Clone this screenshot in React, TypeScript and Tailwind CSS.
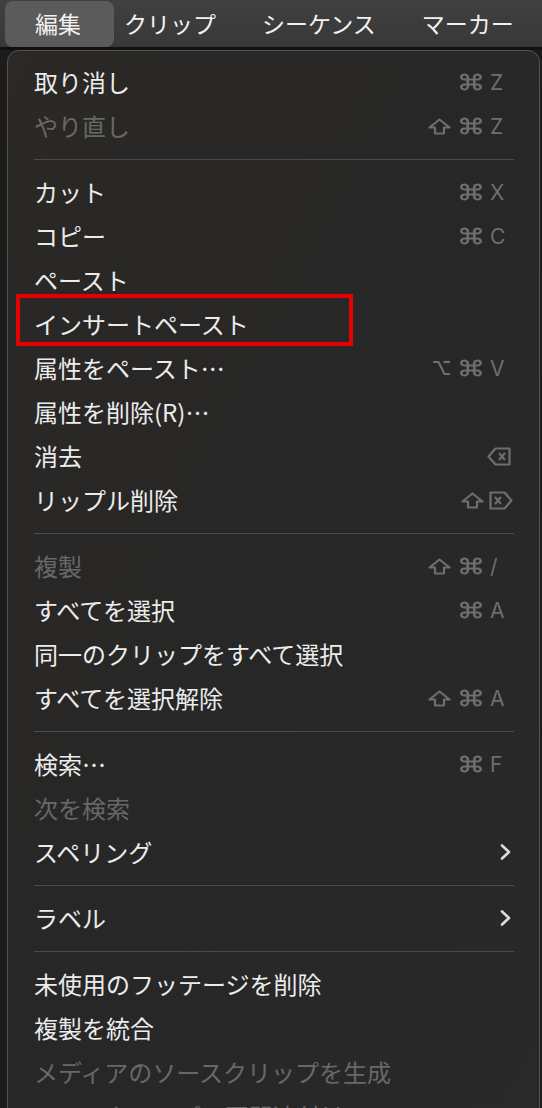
import React from 'react'

type Mod = 'shift' | 'cmd' | 'opt'

interface MenuItem {
  label: string
  disabled?: boolean
  mods?: Mod[]
  keyLabel?: string
  keyIcon?: 'del' | 'fdel'
  submenu?: boolean
  boxed?: boolean
}

type Entry = MenuItem | 'sep'

const entries: Entry[] = [
  { label: '取り消し', mods: ['cmd'], keyLabel: 'Z' },
  { label: 'やり直し', disabled: true, mods: ['shift', 'cmd'], keyLabel: 'Z' },
  'sep',
  { label: 'カット', mods: ['cmd'], keyLabel: 'X' },
  { label: 'コピー', mods: ['cmd'], keyLabel: 'C' },
  { label: 'ペースト' },
  { label: 'インサートペースト', boxed: true },
  { label: '属性をペースト…', mods: ['opt', 'cmd'], keyLabel: 'V' },
  { label: '属性を削除(R)…' },
  { label: '消去', keyIcon: 'del' },
  { label: 'リップル削除', mods: ['shift'], keyIcon: 'fdel' },
  'sep',
  { label: '複製', disabled: true, mods: ['shift', 'cmd'], keyLabel: '/' },
  { label: 'すべてを選択', mods: ['cmd'], keyLabel: 'A' },
  { label: '同一のクリップをすべて選択' },
  { label: 'すべてを選択解除', mods: ['shift', 'cmd'], keyLabel: 'A' },
  'sep',
  { label: '検索…', mods: ['cmd'], keyLabel: 'F' },
  { label: '次を検索', disabled: true },
  { label: 'スペリング', submenu: true },
  'sep',
  { label: 'ラベル', submenu: true },
  'sep',
  { label: '未使用のフッテージを削除' },
  { label: '複製を統合' },
  { label: 'メディアのソースクリップを生成', disabled: true },
  { label: 'ソースクリップの再関連付け', disabled: true },
]

function CmdIcon() {
  return (
    <svg width="26" height="20" viewBox="0 0 24 24" preserveAspectRatio="none" fill="none" stroke="currentColor" strokeWidth={2.4}>
      <path d="M15 6v12a3 3 0 1 0 3-3H6a3 3 0 1 0 3 3V6a3 3 0 1 0-3 3h12a3 3 0 1 0-3-3" />
    </svg>
  )
}

function ShiftIcon() {
  return (
    <svg width="23" height="17" viewBox="0 0 23 17" fill="none" stroke="currentColor" strokeWidth={2.2} strokeLinejoin="round">
      <path d="M11.5 1.5 L21.5 9.5 H16 V15.5 H7 V9.5 H1.5 Z" />
    </svg>
  )
}

function OptIcon() {
  return (
    <svg width="19" height="16" viewBox="0 0 19 16" fill="none" stroke="currentColor" strokeWidth={2.2}>
      <path d="M1 2h5.5l6 12H18" />
      <path d="M11.5 2H18" />
    </svg>
  )
}

function DeleteIcon({ forward }: { forward?: boolean }) {
  return (
    <svg width="24" height="19" viewBox="0 0 24 19" fill="none" stroke="currentColor" strokeWidth={2.2} strokeLinejoin="round">
      {forward ? (
        <>
          <path d="M1.5 1.5 H15.5 L22.5 9.5 L15.5 17.5 H1.5 Z" />
          <path d="M6 6 L12 13 M12 6 L6 13" />
        </>
      ) : (
        <>
          <path d="M8.5 1.5 H22.5 V17.5 H8.5 L1.5 9.5 Z" />
          <path d="M12 6 L18 13 M18 6 L12 13" />
        </>
      )}
    </svg>
  )
}

function Chevron() {
  return (
    <svg width="13" height="18" viewBox="0 0 13 18" fill="none" stroke="currentColor" strokeWidth={2.6} strokeLinecap="round" strokeLinejoin="round">
      <path d="M3 2.5 L10 9 L3 15.5" />
    </svg>
  )
}

function Shortcut({ item }: { item: MenuItem }) {
  if (item.submenu) {
    return (
      <div className="flex w-[22px] justify-end text-[#dcdcdc]">
        <Chevron />
      </div>
    )
  }
  if (!item.mods && !item.keyLabel && !item.keyIcon) return null
  return (
    <div className="flex items-center text-[#6e6e6e]">
      <div className="flex items-center gap-[7px]">
        {item.mods?.map((m, i) => (
          <span key={i} className="flex items-center">
            {m === 'cmd' && <CmdIcon />}
            {m === 'shift' && <ShiftIcon />}
            {m === 'opt' && <OptIcon />}
          </span>
        ))}
      </div>
      <div className="ml-[6px] flex w-[22px] items-center">
        {item.keyLabel && (
          <span className="font-['Inter',sans-serif] text-[21px] leading-none">{item.keyLabel}</span>
        )}
        {item.keyIcon === 'del' && (
          <span className="-ml-[3px]">
            <DeleteIcon />
          </span>
        )}
        {item.keyIcon === 'fdel' && (
          <span className="-ml-[1px]">
            <DeleteIcon forward />
          </span>
        )}
      </div>
    </div>
  )
}

function Row({ item }: { item: MenuItem }) {
  return (
    <div className="relative flex h-[44px] items-center justify-between pl-[26px] pr-[27px]">
      <span className={`whitespace-nowrap text-[24px] leading-none ${item.disabled ? 'text-[#686868]' : 'text-[#ececec]'}`}>
        {item.label}
      </span>
      <Shortcut item={item} />
      {item.boxed && (
        <div className="pointer-events-none absolute -top-[8px] bottom-0 left-[8px] w-[337px] border-[4px] border-[#e60000]" />
      )}
    </div>
  )
}

export default function App() {
  return (
    <div className="h-[1108px] w-[542px] overflow-hidden bg-[#1c1c1c] font-['Noto_Sans_CJK_JP','Inter',sans-serif]">
      {/* menu bar */}
      <header className="flex h-[47px] items-center bg-gradient-to-b from-[#404040] to-[#383838] text-[23px] text-[#f2f2f2]">
        <div className="ml-[5px] flex h-[46px] w-[109px] items-center rounded-[8px] bg-[#5b5b5b] pl-[30px]">編集</div>
        <span className="ml-[10px]">クリップ</span>
        <span className="ml-[46px]">シーケンス</span>
        <span className="ml-[46px]">マーカー</span>
      </header>
      <div className="h-[3px] bg-[#111111]" />

      {/* edit menu */}
      <div className="pl-[7px] pr-[2px]">
        <div className="h-[1100px] rounded-t-[12px] border border-[#545454] bg-gradient-to-br from-[#2b2825] via-[#272727] to-[#292929] pt-[9px]">
          {entries.map((e, i) =>
            e === 'sep' ? (
              <div key={i} className="flex h-[22px] items-center pl-[26px] pr-[25px]">
                <div className="h-px w-full bg-[#4a4a4a]" />
              </div>
            ) : (
              <Row key={i} item={e} />
            )
          )}
        </div>
      </div>
    </div>
  )
}
